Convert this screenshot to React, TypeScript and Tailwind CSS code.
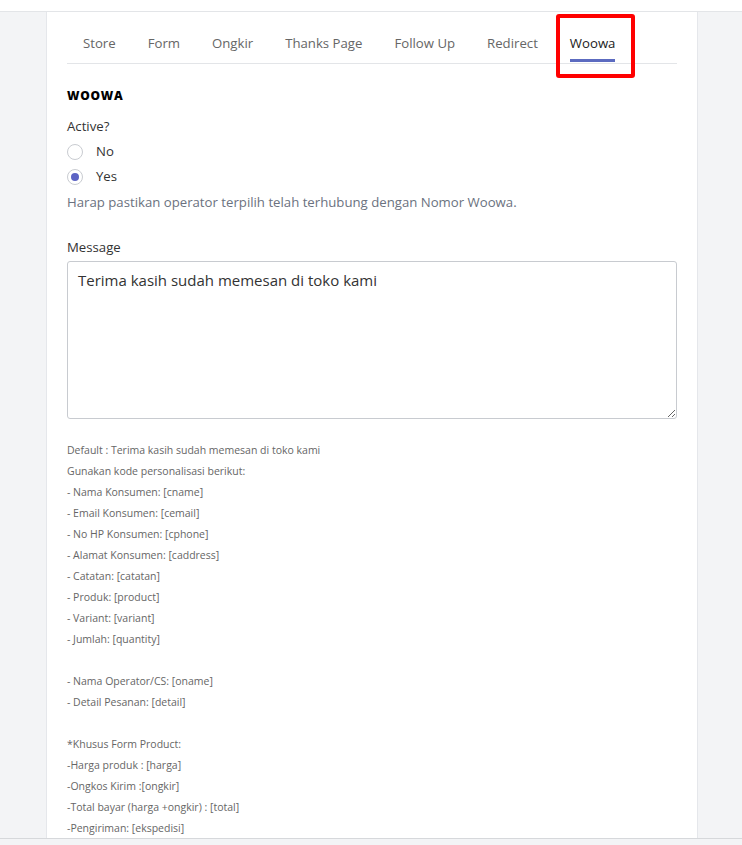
import type React from 'react';

const tabs = ['Store', 'Form', 'Ongkir', 'Thanks Page', 'Follow Up', 'Redirect', 'Woowa'];

const helpLines = [
  'Default : Terima kasih sudah memesan di toko kami',
  'Gunakan kode personalisasi berikut:',
  '- Nama Konsumen: [cname]',
  '- Email Konsumen: [cemail]',
  '- No HP Konsumen: [cphone]',
  '- Alamat Konsumen: [caddress]',
  '- Catatan: [catatan]',
  '- Produk: [product]',
  '- Variant: [variant]',
  '- Jumlah: [quantity]',
  '',
  '- Nama Operator/CS: [oname]',
  '- Detail Pesanan: [detail]',
  '',
  '*Khusus Form Product:',
  '-Harga produk : [harga]',
  '-Ongkos Kirim :[ongkir]',
  '-Total bayar (harga +ongkir) : [total]',
  '-Pengiriman: [ekspedisi]',
];

const Radio: React.FC<{ checked?: boolean; label: string }> = ({ checked, label }) => (
  <label className="flex h-[25px] items-center">
    <span className="flex h-4 w-4 items-center justify-center rounded-full border border-[#c9ccd1] bg-white">
      {checked && <span className="h-2 w-2 rounded-full bg-[#5c63c4]" />}
    </span>
    <span className="ml-[13px] text-[13.2px] text-[#333]">{label}</span>
  </label>
);

const App: React.FC = () => {
  return (
    <div className="flex h-[845px] flex-col overflow-hidden bg-white font-['Open_Sans',sans-serif]">
      <div className="h-[12px] shrink-0 border-b border-[#e3e5e8] bg-white" />
      <div className="flex min-h-0 flex-1 overflow-hidden bg-[#f3f4f6]">
        <div className="w-[46px]" />
        {/* Card */}
        <div className="w-[652px] border-x border-[#e5e7eb] bg-white px-5">
          {/* Tabs */}
          <div className="relative flex border-b border-[#e3e5e8]">
            {tabs.map((t) => (
              <div
                key={t}
                className={`relative px-4 pb-[10px] pt-[21px] text-[13.2px] leading-[20px] ${
                  t === 'Woowa' ? 'text-[#222]' : 'text-[#666]'
                }`}
              >
                {t}
                {t === 'Woowa' && (
                  <span className="absolute bottom-[1px] left-4 right-4 h-[3px] bg-[#5c6bc0]" />
                )}
              </div>
            ))}
            {/* annotation box */}
            <div className="absolute left-[489px] top-[2px] h-[64px] w-[79px] rounded-[3px] border-[4px] border-[#f00]" />
          </div>

          <h3 className="mt-[24px] text-[12px] font-extrabold uppercase leading-4 tracking-[0.06em] text-black">
            Woowa
          </h3>

          <div className="mt-[12px] text-[13.2px] leading-5 text-[#333]">Active?</div>
          <div className="mt-[3px] flex flex-col">
            <Radio label="No" />
            <Radio label="Yes" checked />
          </div>
          <p className="mt-[3px] text-[13.2px] leading-5 text-[#6b7280]">
            Harap pastikan operator terpilih telah terhubung dengan Nomor Woowa.
          </p>

          <div className="mt-[25px] text-[13.2px] leading-5 text-[#333]">Message</div>
          <textarea
            className="mt-[4px] block h-[158px] w-full resize-y rounded-[3px] border border-[#c8cbd0] px-[10px] pb-[8px] pt-[6px] text-[15px] leading-6 text-[#333] outline-none"
            defaultValue="Terima kasih sudah memesan di toko kami"
          />

          <div className="mt-[21px] text-[10.5px] leading-[21px] text-[#666]">
            {helpLines.map((l, i) => (
              <div key={i} className="h-[21px]">
                {l}
              </div>
            ))}
          </div>
        </div>
        <div className="flex-1" />
      </div>
      <div className="h-[7px] shrink-0 border-t border-[#d6d8db] bg-[#f3f4f6]" />
    </div>
  );
};

export default App;
